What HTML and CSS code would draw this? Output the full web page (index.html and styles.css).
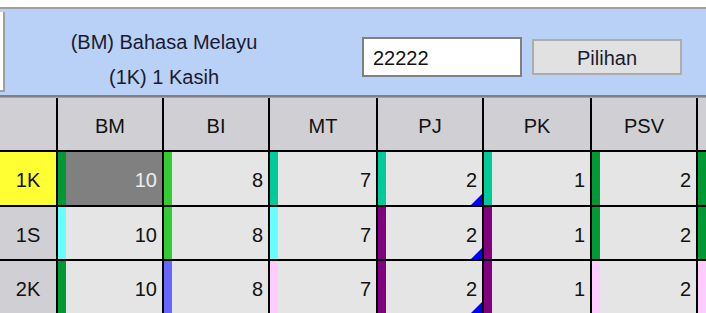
FILE: index.html
```html
<!DOCTYPE html>
<html lang="ms">
<head>
  <meta charset="UTF-8" />
  <title>Markah Kelas</title>
  <link rel="stylesheet" href="styles.css">
</head>
<body>

<div class="topbar"></div>

<div class="panel">
  <div class="stub"></div>
  <div class="label">
    <div>(BM) Bahasa Melayu</div>
    <div>(1K) 1 Kasih</div>
  </div>
  <input class="code-input" type="text" value="22222">
  <button class="btn">Pilihan</button>
</div>

<div class="grid-wrap">
  <div class="grid">
    <div class="head"></div>
    <div class="head">BM</div>
    <div class="head">BI</div>
    <div class="head">MT</div>
    <div class="head">PJ</div>
    <div class="head">PK</div>
    <div class="head">PSV</div>
    <div class="head"></div>

    <div class="rowhead active">1K</div>
    <div class="cell c-dg selected">10</div>
    <div class="cell c-g">8</div>
    <div class="cell c-t">7</div>
    <div class="cell c-t mark">2</div>
    <div class="cell c-t">1</div>
    <div class="cell c-dg">2</div>
    <div class="cell c-dg"></div>

    <div class="rowhead">1S</div>
    <div class="cell c-cy">10</div>
    <div class="cell c-g">8</div>
    <div class="cell c-cy">7</div>
    <div class="cell c-pu mark">2</div>
    <div class="cell c-pu">1</div>
    <div class="cell c-dg">2</div>
    <div class="cell c-dg"></div>

    <div class="rowhead">2K</div>
    <div class="cell c-dg">10</div>
    <div class="cell c-bl">8</div>
    <div class="cell c-pk">7</div>
    <div class="cell c-pu mark">2</div>
    <div class="cell c-pu">1</div>
    <div class="cell c-pk">2</div>
    <div class="cell c-pk"></div>
  </div>
</div>

</body>
</html>
```

FILE: styles.css
```css
:root {
  --panel-blue: #b9d1f6;
  --head-gray: #d0d0d4;
  --cell-gray: #e5e5e5;
  --line: #000;
}

body {
  margin: 0;
  width: 706px;
  height: 313px;
  overflow: hidden;
  background: #fff;
  font-family: "Liberation Sans", Arial, sans-serif;
  font-size: 20px;
  color: #111;
}

.topbar {
  height: 7px;
  border-bottom: 2px solid #a0a0a0;
  background: #fff;
}

.panel {
  display: flex;
  align-items: flex-start;
  height: 86px;
  background: var(--panel-blue);
  border-bottom: 2px solid #808080;
  box-shadow: 0 1px 0 #a4a4a4;
  margin-bottom: 1px;
}

.stub {
  width: 3px;
  height: 78px;
  margin-top: 3px;
  background: #fff;
  border-right: 2px solid #a0a0a0;
  border-bottom: 2px solid #a0a0a0;
}

.label {
  width: 318px;
  padding-top: 16px;
  line-height: 35px;
  text-align: center;
  color: #1a1a30;
}

.code-input {
  box-sizing: border-box;
  width: 160px;
  height: 40px;
  margin: 28px 0 0 39px;
  padding: 2px 0 0 9px;
  border: 2px solid #808080;
  background: #fff;
  font: inherit;
  color: #111;
  outline: none;
}

.btn {
  box-sizing: border-box;
  width: 150px;
  height: 36px;
  margin: 30px 0 0 10px;
  padding: 2px 0 0;
  border: 2px solid #adadad;
  background: #e1e1e1;
  font: inherit;
  color: #1a1a30;
}

.grid-wrap {
  width: 706px;
  overflow: hidden;
}

.grid {
  display: grid;
  grid-template-columns: 56px 104px 104px 106px 104px 106px 104px 104px;
  grid-template-rows: 52px 53px 52px 52px;
  gap: 2px;
  background: var(--line);
  width: 802px;
}

.head,
.rowhead {
  display: flex;
  align-items: center;
  justify-content: center;
  padding-top: 4px;
  background: var(--head-gray);
}

.rowhead.active {
  background: #ffff33;
}

.cell {
  position: relative;
  display: flex;
  align-items: center;
  justify-content: flex-end;
  padding: 4px 5px 0 0;
  background: var(--cell-gray);
  border-left: 8px solid transparent;
}

.cell.selected {
  background: #808080;
  color: #eeeeee;
}

.cell.mark::after {
  content: "";
  position: absolute;
  right: 0;
  bottom: 0;
  width: 11px;
  height: 11px;
  background: #0000ff;
  clip-path: polygon(100% 0, 100% 100%, 0 100%);
}

.c-dg { border-left-color: #009933; }
.c-g  { border-left-color: #33cc33; }
.c-t  { border-left-color: #00cc99; }
.c-cy { border-left-color: #66ffff; }
.c-pu { border-left-color: #800080; }
.c-bl { border-left-color: #6666ff; }
.c-pk { border-left-color: #ffccff; }
```
